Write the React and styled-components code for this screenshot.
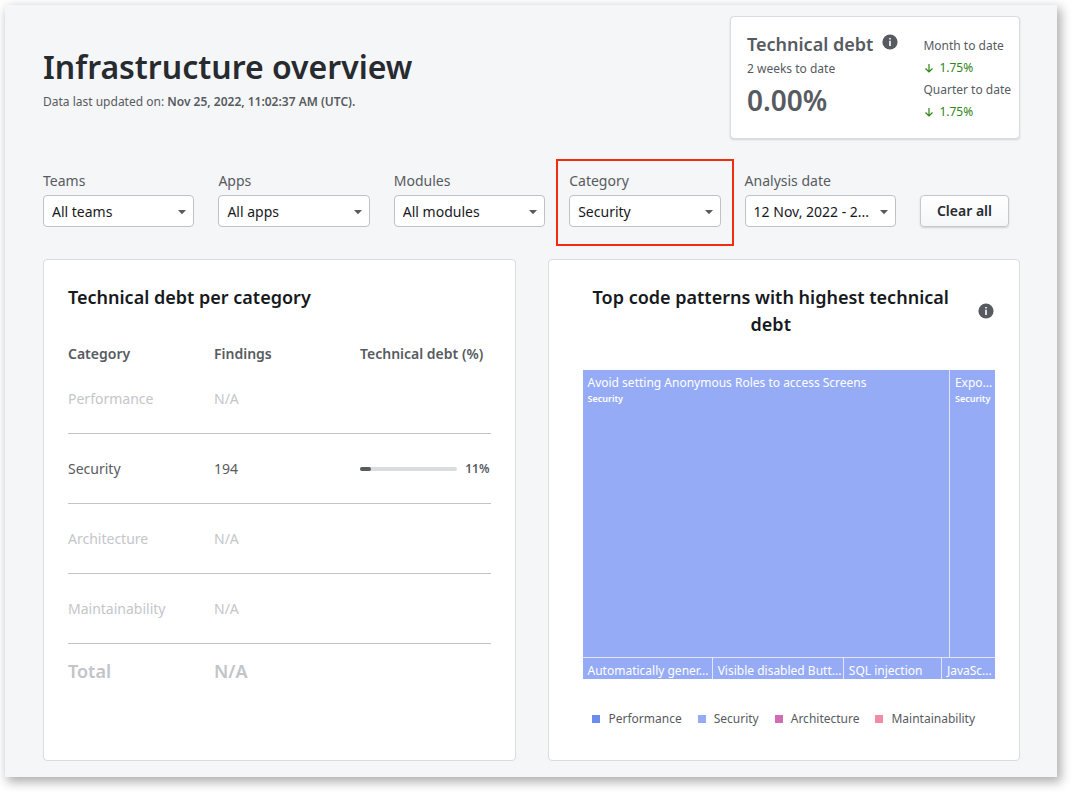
import React from "react";
import styled, { createGlobalStyle } from "styled-components";

const GlobalStyle = createGlobalStyle`
  *, *::before, *::after { box-sizing: border-box; }
  body {
    margin: 0;
    background: #fff;
    color: #575b5f;
    font-family: "Noto Sans", "Open Sans", sans-serif;
    font-size: 14px;
    line-height: 20px;
  }
  h1, h2, p, dl, dd, ul { margin: 0; padding: 0; }
`;

const Page = styled.main`
  margin: 5px 15px 15px 5px;
  padding: 11px 37px 16px 38px;
  background: #f5f6f8;
  box-shadow: 3px 4px 10px 1px rgba(0, 0, 0, 0.32);
`;

const Header = styled.header`
  display: flex;
  justify-content: space-between;
  align-items: flex-start;
`;

const Heading = styled.div`
  padding-top: 28px;
`;

const PageTitle = styled.h1`
  color: #272b30;
  font-size: 32px;
  font-weight: 600;
  line-height: 46px;
`;

const Updated = styled.p`
  margin-top: 2px;
  font-size: 12px;
`;

const Strong = styled.strong`
  font-weight: 600;
`;

const DebtCard = styled.section`
  display: flex;
  justify-content: space-between;
  width: 290px;
  padding: 16px 8px 15px 16px;
  background: #fff;
  border: 1px solid #d9dce0;
  border-radius: 4px;
  box-shadow: 0 1px 2px rgba(0, 0, 0, 0.14);
`;

const DebtTitle = styled.h2`
  display: flex;
  gap: 9px;
  font-size: 18px;
  font-weight: 600;
  line-height: 22px;
  svg { margin-top: 1px; }
`;

const Period = styled.p`
  font-size: 12px;
  line-height: 28px;
`;

const DebtValue = styled.p`
  font-size: 28px;
  font-weight: 600;
  line-height: 34px;
`;

const Trends = styled.dl`
  padding-top: 2px;
  font-size: 12px;
  line-height: 22px;
`;

const Trend = styled.dd`
  display: flex;
  align-items: center;
  gap: 4px;
  color: #2f8516;
`;

const Filters = styled.form`
  display: grid;
  grid-template-columns: repeat(5, minmax(0, 1fr)) 89px;
  gap: 24px;
  align-items: end;
  margin: 32px 11px 32px 0;
`;

const Field = styled.div`
  position: relative;
  display: flex;
  flex-direction: column;
  gap: 4px;
  &::before {
    content: "";
    display: ${(p) => (p.$highlighted ? "block" : "none")};
    position: absolute;
    inset: -12px -13px -19px;
    border: 2px solid #f02d0c;
    pointer-events: none;
  }
`;

const Label = styled.label`
  line-height: 20px;
`;

const SelectWrap = styled.div`
  position: relative;
`;

const Select = styled.select`
  appearance: none;
  display: block;
  width: 100%;
  height: 32px;
  padding: 2px 22px 0 8px;
  background: #fff;
  border: 1px solid #bfc2c7;
  border-radius: 4px;
  color: #16191d;
  font: inherit;
`;

const Caret = styled.svg`
  position: absolute;
  top: 15px;
  right: 8px;
  pointer-events: none;
`;

const ClearButton = styled.button`
  height: 32px;
  padding: 0;
  background: linear-gradient(#fff, #f5f6f8);
  border: 1px solid #c5c8cd;
  border-radius: 4px;
  box-shadow: 0 1px 2px rgba(0, 0, 0, 0.16);
  color: #272b30;
  font: inherit;
  font-weight: 600;
`;

const Panels = styled.div`
  display: grid;
  grid-template-columns: repeat(2, minmax(0, 1fr));
  gap: 32px;
`;

const Panel = styled.section`
  padding: 24px 24px 31px;
  background: #fff;
  border: 1px solid #d9dce0;
  border-radius: 4px;
`;

const PanelHeader = styled.div`
  display: flex;
  align-items: center;
  gap: 9px;
  padding-right: 1px;
`;

const PanelTitle = styled.h2`
  flex: 1;
  color: #16191d;
  font-size: 18px;
  font-weight: 600;
  line-height: 27px;
  text-align: ${(p) => (p.$centered ? "center" : "left")};
`;

const Table = styled.table`
  width: 100%;
  margin-top: 34px;
  border-collapse: collapse;
  table-layout: fixed;
`;

const Column = styled.col`
  width: ${(p) => p.$width};
`;

const ColumnHead = styled.th`
  padding: 0;
  font-weight: 600;
  line-height: 18px;
  text-align: left;
`;

const Row = styled.tr`
  height: 70px;
  border-bottom: 1px solid #c2c4c7;
  color: ${(p) => (p.$muted ? "#c4c6ca" : "inherit")};
`;

const TotalRow = styled.tr`
  height: 56px;
  color: #c2c4c8;
  font-size: 18px;
`;

const Cell = styled.td`
  padding: ${(p) => (p.$bold ? 0 : "2px 0 0")};
  font-weight: ${(p) => (p.$bold ? 600 : 400)};
`;

const Meter = styled.div`
  display: flex;
  align-items: center;
  gap: 8px;
  padding-right: 1px;
  font-size: 12px;
  font-weight: 600;
`;

const Track = styled.div`
  flex: 1;
  height: 4px;
  background: #dadde0;
  border-radius: 2px;
`;

const Fill = styled.div`
  height: 4px;
  background: #575b5f;
  border-radius: 2px;
`;

const Treemap = styled.div`
  display: grid;
  gap: 1px;
  margin: 32px 0 0 10px;
  background: #e1e5f5;
`;

const TreemapRow = styled.div`
  display: grid;
  grid-template-columns: ${(p) => p.$columns};
  gap: 1px;
  height: ${(p) => p.$height};
`;

const Tile = styled.div`
  min-width: 0;
  padding: 4px 0 0 5px;
  background: #96abf6;
  color: #fff;
  font-size: 12px;
  line-height: 18px;
  overflow: hidden;
  white-space: nowrap;
`;

const TileCategory = styled.div`
  font-size: 9px;
  font-weight: 600;
  line-height: 14px;
`;

const Legend = styled.ul`
  display: flex;
  justify-content: center;
  gap: 16px;
  margin-top: 30px;
  font-size: 12px;
  list-style: none;
`;

const LegendItem = styled.li`
  display: flex;
  align-items: center;
  gap: 8px;
  &::before {
    content: "";
    width: 8px;
    height: 8px;
    background: ${(p) => p.$color};
  }
`;

const InfoIcon = () => (
  <svg width="16" height="16" viewBox="0 0 16 16" role="img" aria-label="Information">
    <circle cx="8" cy="8" r="7.6" fill="#575b5f" />
    <path d="M7.2 4h1.6v1.6H7.2zM7.2 6.8h1.6V12H7.2z" fill="#fff" />
  </svg>
);

const DownArrow = () => (
  <svg width="12" height="12" viewBox="0 0 12 12" aria-hidden="true">
    <path d="M6 2v8M2.5 6.5 6 10l3.5-3.5" fill="none" stroke="#2f8516" strokeWidth="1.2" />
  </svg>
);

const filters = [
  { id: "teams", label: "Teams", value: "All teams" },
  { id: "apps", label: "Apps", value: "All apps" },
  { id: "modules", label: "Modules", value: "All modules" },
  { id: "category", label: "Category", value: "Security", highlighted: true },
  { id: "date", label: "Analysis date", value: "12 Nov, 2022 - 2..." },
];

const categories = [
  { name: "Performance", findings: "N/A" },
  { name: "Security", findings: "194", debt: 11 },
  { name: "Architecture", findings: "N/A" },
  { name: "Maintainability", findings: "N/A" },
];

const largePatterns = [
  { name: "Avoid setting Anonymous Roles to access Screens", weight: 366 },
  { name: "Expo...", weight: 45 },
];

const smallPatterns = [
  { name: "Automatically gener...", weight: 129 },
  { name: "Visible disabled Butt...", weight: 130 },
  { name: "SQL injection", weight: 97 },
  { name: "JavaSc...", weight: 53 },
];

const legend = [
  { name: "Performance", color: "#6c8bf0" },
  { name: "Security", color: "#96abf6" },
  { name: "Architecture", color: "#d06bb6" },
  { name: "Maintainability", color: "#f08ca6" },
];

const columnsFor = (patterns) =>
  patterns.map((p) => `minmax(0, ${p.weight}fr)`).join(" ");

export default function App() {
  return (
    <>
      <GlobalStyle />
      <Page>
        <Header>
          <Heading>
            <PageTitle>Infrastructure overview</PageTitle>
            <Updated>
              Data last updated on: <Strong>Nov 25, 2022, 11:02:37 AM (UTC).</Strong>
            </Updated>
          </Heading>
          <DebtCard>
            <div>
              <DebtTitle>
                Technical debt <InfoIcon />
              </DebtTitle>
              <Period>2 weeks to date</Period>
              <DebtValue>0.00%</DebtValue>
            </div>
            <Trends>
              <dt>Month to date</dt>
              <Trend><DownArrow />1.75%</Trend>
              <dt>Quarter to date</dt>
              <Trend><DownArrow />1.75%</Trend>
            </Trends>
          </DebtCard>
        </Header>

        <Filters>
          {filters.map((f) => (
            <Field key={f.id} $highlighted={f.highlighted}>
              <Label htmlFor={f.id}>{f.label}</Label>
              <SelectWrap>
                <Select id={f.id}>
                  <option>{f.value}</option>
                </Select>
                <Caret width="8" height="5" viewBox="0 0 8 5" aria-hidden="true">
                  <path d="M0 0h8L4 4.2z" fill="#575b5f" />
                </Caret>
              </SelectWrap>
            </Field>
          ))}
          <ClearButton type="reset">Clear all</ClearButton>
        </Filters>

        <Panels>
          <Panel>
            <PanelTitle>Technical debt per category</PanelTitle>
            <Table>
              <colgroup>
                <Column $width="146px" />
                <Column $width="146px" />
                <Column $width="auto" />
              </colgroup>
              <thead>
                <tr>
                  <ColumnHead scope="col">Category</ColumnHead>
                  <ColumnHead scope="col">Findings</ColumnHead>
                  <ColumnHead scope="col">Technical debt (%)</ColumnHead>
                </tr>
              </thead>
              <tbody>
                {categories.map((c) => (
                  <Row key={c.name} $muted={c.debt === undefined}>
                    <Cell>{c.name}</Cell>
                    <Cell>{c.findings}</Cell>
                    <Cell>
                      {c.debt !== undefined && (
                        <Meter>
                          <Track>
                            <Fill style={{ width: `${c.debt}%` }} />
                          </Track>
                          {c.debt}%
                        </Meter>
                      )}
                    </Cell>
                  </Row>
                ))}
                <TotalRow>
                  <Cell $bold>Total</Cell>
                  <Cell $bold>N/A</Cell>
                  <Cell />
                </TotalRow>
              </tbody>
            </Table>
          </Panel>

          <Panel>
            <PanelHeader>
              <PanelTitle $centered>Top code patterns with highest technical debt</PanelTitle>
              <InfoIcon />
            </PanelHeader>
            <Treemap>
              <TreemapRow $height="287px" $columns={columnsFor(largePatterns)}>
                {largePatterns.map((p) => (
                  <Tile key={p.name}>
                    {p.name}
                    <TileCategory>Security</TileCategory>
                  </Tile>
                ))}
              </TreemapRow>
              <TreemapRow $height="21px" $columns={columnsFor(smallPatterns)}>
                {smallPatterns.map((p) => (
                  <Tile key={p.name}>{p.name}</Tile>
                ))}
              </TreemapRow>
            </Treemap>
            <Legend>
              {legend.map((l) => (
                <LegendItem key={l.name} $color={l.color}>{l.name}</LegendItem>
              ))}
            </Legend>
          </Panel>
        </Panels>
      </Page>
    </>
  );
}
